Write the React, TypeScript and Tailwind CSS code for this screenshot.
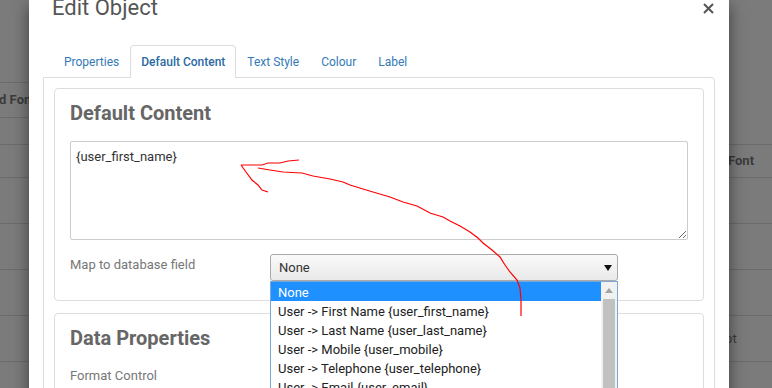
const tabs = ['Properties', 'Default Content', 'Text Style', 'Colour', 'Label'];

const options = [
  'None',
  'User -> First Name {user_first_name}',
  'User -> Last Name {user_last_name}',
  'User -> Mobile {user_mobile}',
  'User -> Telephone {user_telephone}',
  'User -> Email {user_email}',
  'User -> Company {user_company}',
];

function Background() {
  return (
    <div className="flex w-full">
      <div className="w-[700px] pt-[82px]">
        <div className="h-[35px] border-t border-[#6b6b6b] flex items-center">
          <span className="-ml-[20px] text-[13px] font-bold text-[#3b3b3b]">Bold Font</span>
        </div>
        <div className="h-[27px] border-t border-[#6b6b6b]" />
        <div className="h-[33px] border-t border-[#6b6b6b]" />
        <div className="h-[46px] border-t border-[#6b6b6b]" />
        <div className="h-[46px] border-t border-[#6b6b6b]" />
        <div className="h-[46px] border-t border-[#6b6b6b]" />
        <div className="h-[46px] border-t border-[#6b6b6b]" />
        <div className="h-[46px] border-t border-[#6b6b6b]" />
      </div>
      <div className="flex-1 pt-[144px]">
        <div className="h-[33px] border-t border-[#6b6b6b] flex items-center pl-[28px]">
          <span className="text-[13px] font-bold text-[#3b3b3b]">Font</span>
        </div>
        <div className="h-[46px] border-t border-[#6b6b6b]" />
        <div className="h-[46px] border-t border-[#6b6b6b]" />
        <div className="h-[46px] border-t border-[#6b6b6b]" />
        <div className="h-[46px] border-t border-[#6b6b6b] flex items-center pl-[3px]">
          <span className="text-[13px] text-[#3b3b3b]">Script</span>
        </div>
        <div className="h-[46px] border-t border-[#6b6b6b]" />
      </div>
    </div>
  );
}

function Panel({ title, children }: { title: string; children: React.ReactNode }) {
  return (
    <div className="border border-[#ddd] rounded-[4px] px-[15px] pt-[12px] pb-[19px]">
      <h3 className="text-[20px] leading-[24px] font-bold text-[#666]">{title}</h3>
      <div className="mt-[16px]">{children}</div>
    </div>
  );
}

function MapSelect() {
  return (
    <div className="relative w-[348px]">
      <div className="h-[27px] flex items-center justify-between border border-[#aaa] rounded-[3px] bg-gradient-to-b from-[#fafafa] to-[#e9e9e9] pl-[8px] pr-[5px]">
        <span className="text-[13px] text-[#333] pt-px">None</span>
        <svg width="8" height="6" viewBox="0 0 8 6">
          <path d="M0 0 L8 0 L4 6 Z" fill="#111" />
        </svg>
      </div>
      <div className="absolute top-full left-0 z-20 w-[348px] h-[140px] border border-[#7aa7d8] bg-white flex">
        <ul className="flex-1">
          {options.map((o, i) => (
            <li
              key={o}
              className={
                i === 0
                  ? 'h-[19px] leading-[21px] pl-[7px] text-[13px] bg-[#1e90ff] text-white'
                  : 'h-[19px] leading-[21px] pl-[7px] text-[13px] text-[#222]'
              }
            >
              {o}
            </li>
          ))}
        </ul>
        <div className="w-[16px] bg-[#f1f1f1] flex flex-col">
          <div className="h-[17px] flex items-center justify-center">
            <svg width="8" height="5" viewBox="0 0 8 5">
              <path d="M0 5 L4 0 L8 5 Z" fill="#a3a3a3" />
            </svg>
          </div>
          <div className="flex-1 mx-[2px] bg-[#c1c1c1]" />
        </div>
      </div>
    </div>
  );
}

export default function App() {
  return (
    <div className="relative w-[772px] h-[388px] overflow-hidden bg-[#7b7b7b] font-['Roboto',sans-serif]">
      <Background />

      <div className="absolute top-0 left-[29px] w-[700px] h-[440px] bg-white shadow-[0_5px_15px_rgba(0,0,0,0.5)]">
        <div className="flex justify-between h-[45px] pl-[23px] pr-[15px]">
          <h4 className="-mt-[3px] text-[22px] leading-[22px] text-[#555]">Edit Object</h4>
          <svg className="mt-[3px]" width="11" height="11" viewBox="0 0 11 11">
            <path d="M1 1 L10 10 M10 1 L1 10" stroke="#555" strokeWidth="2" />
          </svg>
        </div>

        <div className="relative z-10 -mb-px ml-[14px] flex pl-[10px]">
          {tabs.map((t) =>
            t === 'Default Content' ? (
              <div
                key={t}
                className="h-[33px] px-[10px] leading-[33px] text-[12px] font-medium text-[#2b6aa3] bg-white border border-b-0 border-[#ddd] rounded-t-[4px]"
              >
                {t}
              </div>
            ) : (
              <div key={t} className="h-[33px] px-[10px] leading-[33px] text-[12px] text-[#337ab7] border border-transparent">
                {t}
              </div>
            )
          )}
        </div>

        <div className="ml-[14px] w-[672px] border border-[#ddd] rounded-tr-[4px] p-[10px]">
          <Panel title="Default Content">
            <textarea
              readOnly
              value="{user_first_name}"
              className="block w-full h-[99px] border border-[#ccc] rounded-[2px] px-[5px] py-[6px] text-[13px] leading-[18px] text-[#333] font-['Roboto',sans-serif] outline-none"
            />
            <div className="mt-[14px] flex items-start">
              <label className="w-[200px] pt-[2px] text-[13px] leading-[18px] text-[#777]">Map to database field</label>
              <MapSelect />
            </div>
          </Panel>
          <div className="mt-[12px]">
            <Panel title="Data Properties">
              <label className="block pt-px text-[13px] leading-[18px] text-[#777]">Format Control</label>
              <div className="h-[60px]" />
            </Panel>
          </div>
        </div>
      </div>

      <svg className="absolute inset-0 pointer-events-none z-30" width="772" height="388" viewBox="0 0 772 388">
        <g fill="none" stroke="#ff0000" strokeWidth="1.2">
          <polyline points="241,165 262,165 268,163 280,163 288,161 299,160" />
          <polyline points="241,165 246,172 252,180 258,185 262,190 268,192" />
          <polyline points="258,168 270,170 283,172 302,173 313,176 330,179 343,182 350,185 363,189 373,192 390,197 403,202 417,206 430,213 443,217 450,221 460,226 470,232 478,238 483,243 492,250 500,257 505,265 510,272 517,280 520,288 521,300 521,316" />
        </g>
      </svg>
    </div>
  );
}
